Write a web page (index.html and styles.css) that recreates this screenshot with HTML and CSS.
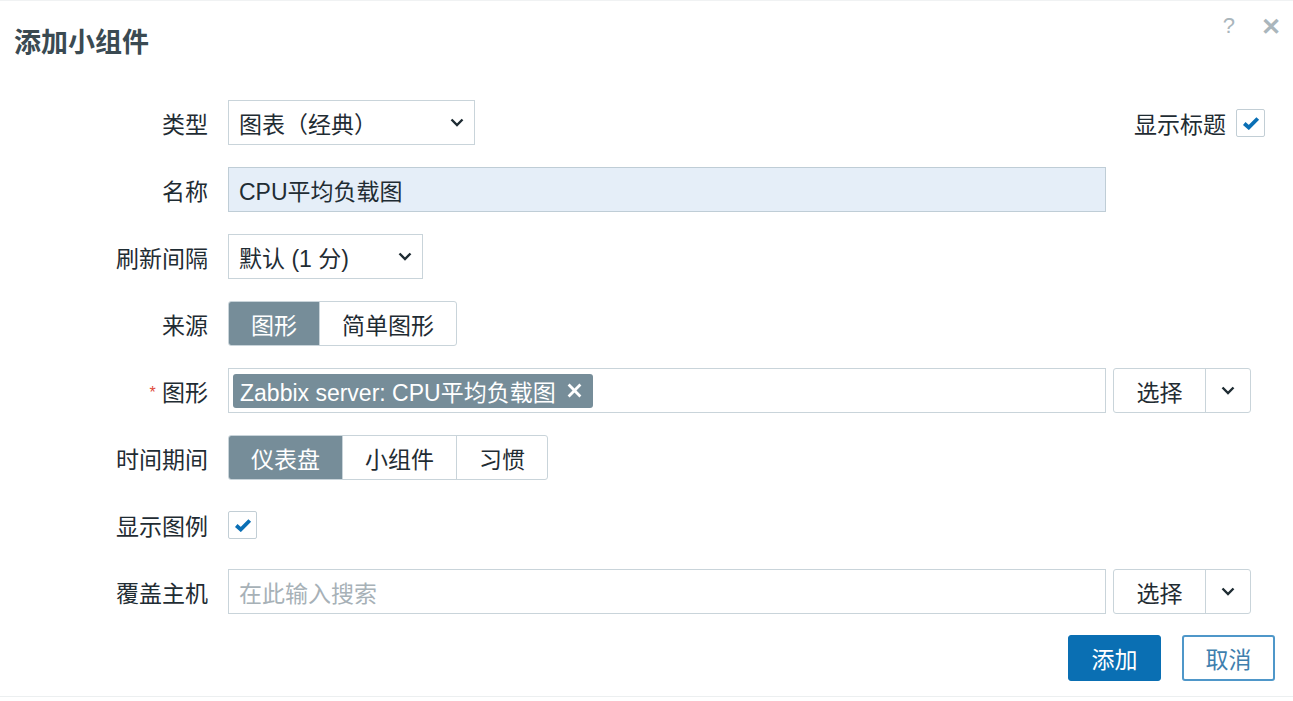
FILE: index.html
```html
<!DOCTYPE html>
<html lang="zh-CN">
<head>
  <meta charset="UTF-8" />
  <meta name="viewport" content="width=device-width, initial-scale=1" />
  <title>添加小组件</title>
  <link rel="stylesheet" href="styles.css">
</head>
<body>
  <div class="dialog">
    <div class="dialog-head">
      <h1>添加小组件</h1>
      <div class="head-icons">
        <span class="help">?</span>
        <span class="close">&#x2715;</span>
      </div>
    </div>

    <form class="widget-form">
      <label class="lbl">类型</label>
      <div class="field">
        <div class="select" style="width: 247px">
          <span>图表（经典）</span>
          <svg class="chev" viewBox="0 0 14 9"><path d="M1.5 1.5 L7 7 L12.5 1.5" /></svg>
        </div>
        <div class="show-title">
          <span>显示标题</span>
          <span class="check"><svg viewBox="0 0 16 12"><path d="M2 6.5 L6 10 L14 2" /></svg></span>
        </div>
      </div>

      <label class="lbl">名称</label>
      <div class="field">
        <div class="input filled">CPU平均负载图</div>
      </div>

      <label class="lbl">刷新间隔</label>
      <div class="field">
        <div class="select" style="width: 195px">
          <span>默认 (1 分)</span>
          <svg class="chev" viewBox="0 0 14 9"><path d="M1.5 1.5 L7 7 L12.5 1.5" /></svg>
        </div>
      </div>

      <label class="lbl">来源</label>
      <div class="field">
        <div class="segments">
          <span class="seg active">图形</span>
          <span class="seg">简单图形</span>
        </div>
      </div>

      <label class="lbl"><span class="req">*</span> 图形</label>
      <div class="field">
        <div class="input multi">
          <span class="chip">Zabbix server: CPU平均负载图
            <svg class="chip-x" viewBox="0 0 14 14"><path d="M1.5 1.5 L12.5 12.5 M12.5 1.5 L1.5 12.5" /></svg>
          </span>
        </div>
        <div class="pick">
          <span class="pick-btn">选择</span>
          <span class="pick-drop"><svg class="chev" viewBox="0 0 14 9"><path d="M1.5 1.5 L7 7 L12.5 1.5" /></svg></span>
        </div>
      </div>

      <label class="lbl">时间期间</label>
      <div class="field">
        <div class="segments">
          <span class="seg active">仪表盘</span>
          <span class="seg">小组件</span>
          <span class="seg">习惯</span>
        </div>
      </div>

      <label class="lbl">显示图例</label>
      <div class="field">
        <span class="check"><svg viewBox="0 0 16 12"><path d="M2 6.5 L6 10 L14 2" /></svg></span>
      </div>

      <label class="lbl">覆盖主机</label>
      <div class="field">
        <div class="input placeholder">在此输入搜索</div>
        <div class="pick">
          <span class="pick-btn">选择</span>
          <span class="pick-drop"><svg class="chev" viewBox="0 0 14 9"><path d="M1.5 1.5 L7 7 L12.5 1.5" /></svg></span>
        </div>
      </div>
    </form>

    <div class="dialog-foot">
      <button class="btn primary" type="button">添加</button>
      <button class="btn secondary" type="button">取消</button>
    </div>
  </div>
</body>
</html>
```

FILE: styles.css
```css
body {
  margin: 0;
  background: #fff;
  color: #1f2c33;
  font-family: "Liberation Sans", "Noto Sans CJK SC", sans-serif;
  font-size: 23px;
}
.dialog {
  height: 697px;
  border-top: 1px solid #f0f2f3;
  border-bottom: 1px solid #eceff0;
  box-sizing: border-box;
}
.dialog-head {
  display: flex;
  justify-content: space-between;
  align-items: flex-start;
  padding: 24px 12px 0 14px;
  height: 75px;
  box-sizing: border-box;
}
.dialog-head h1 {
  margin: 0;
  font-size: 27px;
  font-weight: bold;
  color: #3a4a52;
  line-height: 36px;
}
.head-icons {
  display: flex;
  gap: 26px;
  color: #aab6bc;
  margin-top: -12px;
}
.help {
  font-size: 22px;
}
.close {
  font-size: 24px;
  font-weight: bold;
}
.widget-form {
  display: grid;
  grid-template-columns: 208px 1047px;
  column-gap: 20px;
  row-gap: 22px;
  grid-auto-rows: 45px;
  margin-top: 24px;
}
.lbl {
  justify-self: end;
  align-self: center;
  white-space: nowrap;
}
.req {
  color: #e0493a;
  font-size: 16px;
  vertical-align: 3px;
}
.field {
  display: flex;
  align-items: center;
  gap: 7px;
}
.select,
.input {
  height: 45px;
  box-sizing: border-box;
  border: 1px solid #c9d4da;
  display: flex;
  align-items: center;
  padding: 0 10px;
  background: #fff;
}
.select {
  justify-content: space-between;
}
.chev {
  width: 14px;
  height: 9px;
  fill: none;
  stroke: #1f2c33;
  stroke-width: 2.4;
}
.input {
  width: 878px;
}
.input.filled {
  background: #e5eef8;
  border-color: #bfcdd6;
}
.input.multi {
  padding: 0 4px;
}
.input.placeholder {
  color: #a7b1b7;
}
.chip {
  display: flex;
  align-items: center;
  gap: 11px;
  background: #768d99;
  color: #fff;
  border-radius: 3px;
  height: 34px;
  padding: 0 11px 0 7px;
  white-space: nowrap;
}
.chip-x {
  flex: none;
  width: 15px;
  height: 15px;
  fill: none;
  stroke: #fff;
  stroke-width: 2.6;
}
.show-title {
  margin-left: auto;
  margin-right: 10px;
  display: flex;
  align-items: center;
  gap: 10px;
}
.check {
  width: 29px;
  height: 28px;
  box-sizing: border-box;
  border: 1px solid #c2ced5;
  border-radius: 2px;
  display: flex;
  align-items: center;
  justify-content: center;
}
.check svg {
  width: 18px;
  height: 14px;
  fill: none;
  stroke: #0a6fb5;
  stroke-width: 3.4;
}
.segments {
  display: flex;
  height: 45px;
  border: 1px solid #c9d4da;
  border-radius: 3px;
  box-sizing: border-box;
  overflow: hidden;
}
.seg {
  display: flex;
  align-items: center;
  padding: 0 22px;
  border-left: 1px solid #c9d4da;
}
.seg:first-child {
  border-left: none;
}
.seg.active {
  background: #768d99;
  color: #fff;
}
.pick {
  display: flex;
  height: 45px;
  border: 1px solid #c9d4da;
  border-radius: 3px;
  box-sizing: border-box;
}
.pick-btn {
  width: 91px;
  display: flex;
  align-items: center;
  justify-content: center;
  border-right: 1px solid #c9d4da;
}
.pick-drop {
  width: 44px;
  display: flex;
  align-items: center;
  justify-content: center;
}
.dialog-foot {
  display: flex;
  justify-content: flex-end;
  gap: 21px;
  padding-right: 18px;
  margin-top: 21px;
}
.btn {
  width: 93px;
  height: 46px;
  border-radius: 3px;
  font-family: inherit;
  font-size: 23px;
  cursor: pointer;
}
.btn.primary {
  background: #0a6fb3;
  border: 1px solid #0a6fb3;
  color: #fff;
}
.btn.secondary {
  background: #fff;
  border: 2px solid #4f97c9;
  color: #3f7fae;
}
```
